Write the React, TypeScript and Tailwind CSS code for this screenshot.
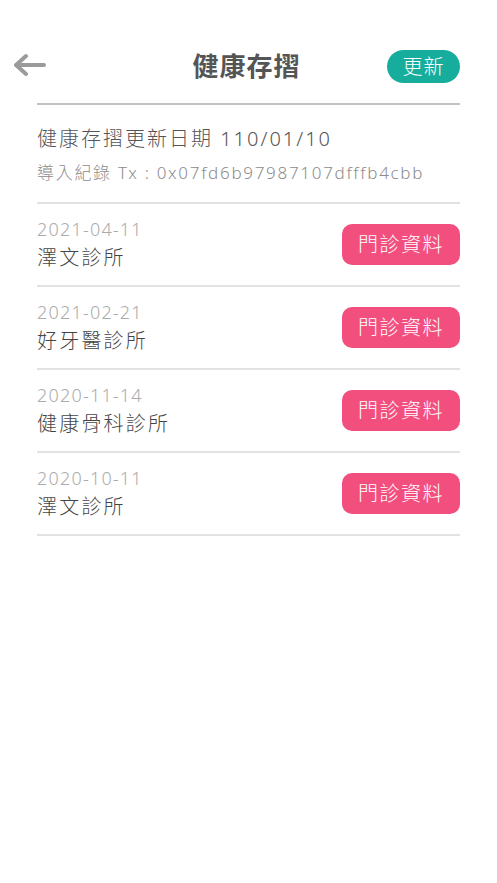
import React from "react";

const rows = [
  { date: "2021-04-11", name: "澤文診所" },
  { date: "2021-02-21", name: "好牙醫診所" },
  { date: "2020-11-14", name: "健康骨科診所" },
  { date: "2020-10-11", name: "澤文診所" },
];

export default function App() {
  return (
    <div
      className="min-h-[883px] w-full bg-white font-light"
      style={{ fontFamily: '"Noto Sans", "Noto Sans CJK TC", sans-serif' }}
    >
      <div className="grid grid-cols-[1fr_auto_1fr] items-center px-[14px] pt-[50px]">
        <div className="flex items-center">
          <svg width="32" height="24" viewBox="0 0 32 24" className="mt-[-4px]">
            <path
              d="M2 12 H30 M2 12 L12 3 M2 12 L12 21"
              stroke="#9b9b9b"
              strokeWidth="4"
              strokeLinecap="round"
              strokeLinejoin="round"
              fill="none"
            />
          </svg>
        </div>
        <div className="mr-[4px] text-[26px] font-bold leading-[33px] tracking-[1px] text-[#555555]">
          健康存摺
        </div>
        <div className="flex justify-end pr-[23px]">
          <button className="flex h-[33px] w-[73px] items-center justify-center rounded-full bg-[#17ad9c] text-[20px] tracking-[1px] text-white">
            更新
          </button>
        </div>
      </div>

      <div className="mx-[37px] mt-[20px] border-b-2 border-[#c2c2c2]" />

      <div className="mx-[37px] border-b-2 border-[#e2e2e2] pb-[15px] pt-[20px]">
        <div className="text-[20px] leading-[28px] tracking-[2px] text-[#555555]">
          健康存摺更新日期 110/01/10
        </div>
        <div className="mt-[6px] text-[17px] leading-[28px] tracking-[1.7px] text-[#8c8c8c]">
          導入紀錄 Tx : 0x07fd6b97987107dfffb4cbb
        </div>
      </div>

      {rows.map((r, i) => (
        <div
          key={i}
          className="mx-[37px] flex h-[83px] items-center justify-between border-b-2 border-[#e2e2e2]"
        >
          <div className="flex flex-col">
            <div className="text-[18px] leading-[24px] tracking-[1.2px] text-[#ababab]">
              {r.date}
            </div>
            <div className="mt-[3px] text-[20px] leading-[28px] tracking-[2.2px] text-[#454545]">
              {r.name}
            </div>
          </div>
          <button className="flex h-[41px] w-[118px] items-center justify-center rounded-[10px] bg-[#f24f7f] text-[20px] tracking-[1.5px] text-white">
            門診資料
          </button>
        </div>
      ))}
    </div>
  );
}
